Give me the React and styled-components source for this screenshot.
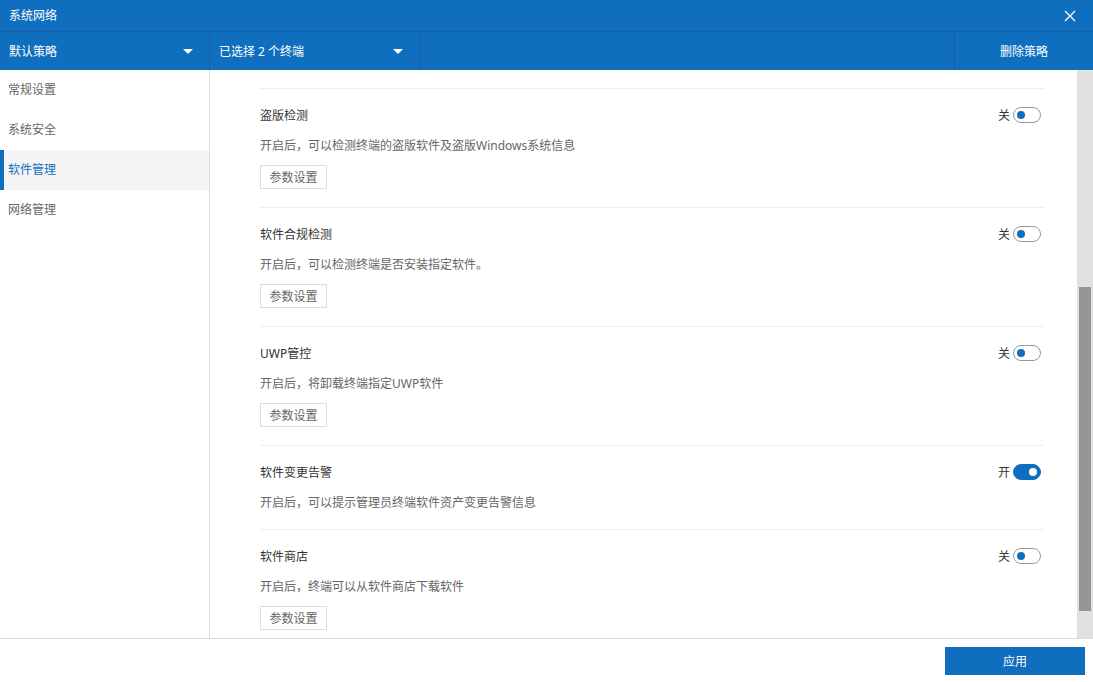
import { useState } from "react";
import styled, { createGlobalStyle } from "styled-components";

const menu = ["常规设置", "系统安全", "软件管理", "网络管理"];

const policies = [
  { id: "piracy", title: "盗版检测", desc: "开启后，可以检测终端的盗版软件及盗版Windows系统信息", params: true, on: false },
  { id: "compliance", title: "软件合规检测", desc: "开启后，可以检测终端是否安装指定软件。", params: true, on: false },
  { id: "uwp", title: "UWP管控", desc: "开启后，将卸载终端指定UWP软件", params: true, on: false },
  { id: "change", title: "软件变更告警", desc: "开启后，可以提示管理员终端软件资产变更告警信息", params: false, on: true },
  { id: "store", title: "软件商店", desc: "开启后，终端可以从软件商店下载软件", params: true, on: false },
];

const Dropdown = ({ label, value }) => (
  <DropdownBox>
    <select aria-label={label} defaultValue={value}>
      <option>{value}</option>
    </select>
    <svg width="10" height="5" viewBox="0 0 10 5" aria-hidden="true">
      <path d="M0 0H10L5 5Z" fill="#fff" />
    </svg>
  </DropdownBox>
);

const Policy = ({ id, title, desc, params, on }) => {
  const [enabled, setEnabled] = useState(on);

  return (
    <PolicyRow>
      <PolicyHead>
        <h2>{title}</h2>
        <SwitchLabel htmlFor={id}>
          {enabled ? "开" : "关"}
          <Switch
            id={id}
            type="checkbox"
            checked={enabled}
            onChange={() => setEnabled(!enabled)}
          />
        </SwitchLabel>
      </PolicyHead>
      <p>{desc}</p>
      {params && (
        <Actions>
          <ParamButton type="button">参数设置</ParamButton>
        </Actions>
      )}
    </PolicyRow>
  );
};

const App = () => {
  const [active, setActive] = useState("软件管理");

  return (
    <>
      <GlobalStyle />
      <Window>
        <TitleBar>
          <h1>系统网络</h1>
          <CloseButton type="button" aria-label="关闭">
            <svg width="12" height="12" viewBox="0 0 12 12">
              <path d="M1 1L11 11M11 1L1 11" stroke="#fff" strokeWidth="1.3" fill="none" />
            </svg>
          </CloseButton>
        </TitleBar>
        <Toolbar>
          <Dropdown label="策略" value="默认策略" />
          <Dropdown label="终端" value="已选择 2 个终端" />
          <DeleteButton type="button">删除策略</DeleteButton>
        </Toolbar>
        <Body>
          <Sidebar>
            {menu.map((item) => (
              <MenuItem
                key={item}
                href="#"
                $active={item === active}
                onClick={() => setActive(item)}
              >
                {item}
              </MenuItem>
            ))}
          </Sidebar>
          <Content>
            {policies.map((policy) => (
              <Policy key={policy.id} {...policy} />
            ))}
          </Content>
          <ScrollTrack>
            <ScrollThumb />
          </ScrollTrack>
        </Body>
        <Footer>
          <ApplyButton type="button">应用</ApplyButton>
        </Footer>
      </Window>
    </>
  );
};

const GlobalStyle = createGlobalStyle`
  *{
    box-sizing: border-box;
  }

  body{
    margin: 0;
    background: #fff;
    color: #666;
    font: 12px/20px "Noto Sans", "Noto Sans CJK SC", sans-serif;
  }

  h1, h2, p{
    margin: 0;
    font-size: 12px;
    font-weight: 400;
  }

  button, select, input{
    margin: 0;
    font: inherit;
  }

  button, select{
    cursor: pointer;
  }
`;

const Window = styled.div`
  display: flex;
  flex-direction: column;
  height: 100vh;
`;

const TitleBar = styled.header`
  display: flex;
  align-items: center;
  justify-content: space-between;
  height: 32px;
  padding: 0 9px;
  background: #106ebe;
  border-bottom: 1px solid #1a5ca8;
  color: #fff;
`;

const CloseButton = styled.button`
  display: flex;
  align-items: center;
  justify-content: center;
  width: 28px;
  height: 28px;
  padding: 0;
  border: none;
  background: none;
`;

const Toolbar = styled.div`
  display: flex;
  height: 38px;
  background: #106ebe;
`;

const DropdownBox = styled.div`
  position: relative;
  flex: none;
  width: 210px;
  border-right: 1px solid #1a5ca8;

  select{
    width: 100%;
    height: 100%;
    padding: 2px 32px 0 9px;
    border: none;
    outline: none;
    appearance: none;
    background: #106ebe;
    color: #fff;
  }

  svg{
    position: absolute;
    top: 17px;
    right: 16px;
    pointer-events: none;
  }
`;

const DeleteButton = styled.button`
  width: 139px;
  margin-left: auto;
  padding: 2px 0 0;
  border: none;
  border-left: 1px solid #1a5ca8;
  background: none;
  color: #fff;
`;

const Body = styled.div`
  display: flex;
  flex: 1;
  min-height: 0;
`;

const Sidebar = styled.nav`
  flex: none;
  width: 210px;
  border-right: 1px solid #dcdcdc;
`;

const MenuItem = styled.a`
  display: block;
  padding: 10px 4px;
  border-left: 4px solid ${({ $active }) => ($active ? "#106ebe" : "transparent")};
  background: ${({ $active }) => ($active ? "#f5f5f5" : "transparent")};
  color: ${({ $active }) => ($active ? "#106ebe" : "#666")};
  text-decoration: none;
`;

const Content = styled.main`
  flex: 1;
  min-width: 0;
  padding: 18px 33px 0 50px;
  overflow: hidden;
`;

const PolicyRow = styled.section`
  padding: 17px 0 16px;
  border-top: 1px solid #eee;
`;

const PolicyHead = styled.div`
  display: flex;
  justify-content: space-between;
  margin-bottom: 10px;
  padding-right: 3px;
  color: #333;
`;

const SwitchLabel = styled.label`
  display: flex;
  align-items: center;
  gap: 3px;
  cursor: pointer;
`;

const Switch = styled.input`
  display: flex;
  align-items: center;
  width: 28px;
  height: 16px;
  margin-bottom: 2px;
  padding: 0 3px;
  border: 1px solid #999;
  border-radius: 8px;
  appearance: none;
  background: #fff;
  cursor: pointer;

  &::before{
    content: "";
    width: 8px;
    height: 8px;
    border-radius: 50%;
    background: #106ebe;
  }

  &:checked{
    justify-content: flex-end;
    border-color: #106ebe;
    background: #106ebe;
  }

  &:checked::before{
    background: #fff;
  }
`;

const Actions = styled.div`
  display: flex;
  padding: 9px 0 2px;
`;

const ParamButton = styled.button`
  min-width: 67px;
  height: 24px;
  padding: 2px 8px 0;
  border: 1px solid #dcdcdc;
  background: #fff;
  color: #666;
`;

const ScrollTrack = styled.div`
  display: grid;
  flex: none;
  grid-template-rows: 217fr 324fr 27fr;
  width: 16px;
  padding: 0 2px;
  background: #e1e1e1;
`;

const ScrollThumb = styled.div`
  grid-row: 2;
  background: #969696;
`;

const Footer = styled.footer`
  display: flex;
  justify-content: flex-end;
  padding: 8px 8px 7px;
  border-top: 1px solid #dcdcdc;
`;

const ApplyButton = styled.button`
  width: 140px;
  height: 28px;
  padding: 2px 0 0;
  border: none;
  background: #106ebe;
  color: #fff;
`;

export default App;
